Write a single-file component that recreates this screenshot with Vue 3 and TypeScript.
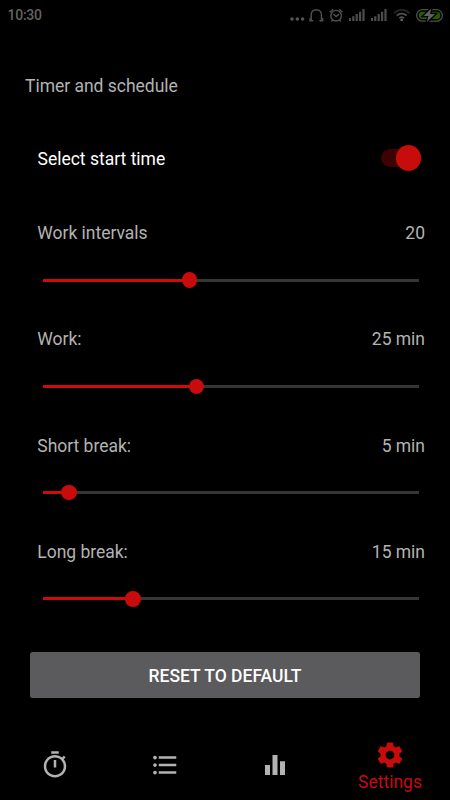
<script setup lang="ts">
import { ref } from 'vue'

interface Interval {
  label: string
  value: string
  percent: number
}

const intervals = ref<Interval[]>([
  { label: 'Work intervals', value: '20', percent: 38.9 },
  { label: 'Work:', value: '25 min', percent: 40.8 },
  { label: 'Short break:', value: '5 min', percent: 6.9 },
  { label: 'Long break:', value: '15 min', percent: 23.9 },
])
const startTime = ref(true)
</script>

<template>
  <div class="screen">
    <header class="status">
      <span class="clock">10:30</span>
      <svg class="status-icons" width="160" height="30" viewBox="0 0 160 30">
        <g fill="#555">
          <circle cx="2" cy="19" r="1.8" />
          <circle cx="7.3" cy="19" r="1.8" />
          <circle cx="12.6" cy="19" r="1.8" />
        </g>
        <g fill="none" stroke="#505050" stroke-width="1.4">
          <path d="M21.2 20V14.5a5.1 4.8 0 0 1 10.2 0V20" />
          <path d="M19.3 20.7h4M29.4 20.7h4M20 18v3M32.6 18v3" />
          <circle cx="46.1" cy="15.7" r="5.3" />
          <path d="M43.5 14.3l2.6 2.3 2.9-2.5M39.8 12.2l3.3-2.9M52.4 12.2l-3.3-2.9M42.7 20l-1.3 1.5M49.5 20l1.3 1.5" />
        </g>
        <g v-for="x in [59, 81]" :key="x" :transform="`translate(${x} 0)`" fill="#4d4d4d">
          <rect x="0" y="18" width="2" height="3" />
          <rect x="3.2" y="16.2" width="2.2" height="4.8" />
          <rect x="6.6" y="14" width="2.2" height="7" />
          <rect x="10" y="11.8" width="2.2" height="9.2" />
          <rect x="13.4" y="9" width="2.2" height="12" />
        </g>
        <g fill="none" stroke-width="1.8">
          <path d="M104 13.1a11 11 0 0 1 15.4 0" stroke="#252525" />
          <path d="M106.7 15.6a7.4 7.4 0 0 1 10 0" stroke="#505050" />
          <path d="M109.3 18.1a4 4 0 0 1 4.8 0" stroke="#505050" />
        </g>
        <circle cx="111.7" cy="19.9" r="1.4" fill="#606060" />
        <rect x="126.6" y="9.7" width="25.8" height="11.4" rx="5.7" fill="none" stroke="#4d4d4d" stroke-width="1.3" />
        <rect x="128.7" y="11.7" width="21.6" height="7.4" rx="3.7" fill="#275700" />
        <path d="M141.3 8.5l-7.7 7.5h4.8l-1.5 6 8.2-8h-5z" fill="#606060" stroke="#000" stroke-width="2.6" paint-order="stroke" />
      </svg>
    </header>

    <main>
      <h1>Timer and schedule</h1>
      <div class="switch-row">
        <span>Select start time</span>
        <button class="switch" role="switch" aria-label="Select start time" :aria-checked="startTime" @click="startTime = !startTime">
          <span class="thumb" />
        </button>
      </div>
      <section v-for="item in intervals" :key="item.label" class="setting">
        <div class="setting-head">
          <span>{{ item.label }}</span>
          <span>{{ item.value }}</span>
        </div>
        <div class="slider">
          <div class="fill" :style="{ width: item.percent + '%' }"></div>
          <div class="knob"></div>
          <div class="rest"></div>
        </div>
      </section>
      <button class="reset">RESET TO DEFAULT</button>
    </main>

    <nav>
      <a class="tab">
        <svg viewBox="0 0 24 24"><path d="M15 1H9v2h6V1zm-4 13h2V8h-2v6zm8.03-6.61l1.42-1.42c-.43-.51-.9-.99-1.41-1.41l-1.42 1.42C16.07 4.74 14.12 4 12 4c-4.97 0-9 4.03-9 9s4.02 9 9 9 9-4.03 9-9c0-2.12-.74-4.07-1.97-5.61zM12 20c-3.87 0-7-3.13-7-7s3.13-7 7-7 7 3.13 7 7-3.13 7-7 7z" /></svg>
      </a>
      <a class="tab">
        <svg viewBox="0 0 24 24"><path d="M4 10.5c-.83 0-1.5.67-1.5 1.5s.67 1.5 1.5 1.5 1.5-.67 1.5-1.5-.67-1.5-1.5-1.5zm0-6c-.83 0-1.5.67-1.5 1.5S3.17 7.5 4 7.5 5.5 6.83 5.5 6 4.83 4.5 4 4.5zm0 12c-.83 0-1.5.68-1.5 1.5s.68 1.5 1.5 1.5 1.5-.68 1.5-1.5-.67-1.5-1.5-1.5zM7 19h14v-2H7v2zm0-6h14v-2H7v2zm0-8v2h14V5H7z" /></svg>
      </a>
      <a class="tab">
        <svg viewBox="0 0 24 24"><path d="M10 20h4V4h-4v16zm-6 0h4v-8H4v8zM16 9v11h4V9h-4z" /></svg>
      </a>
      <a class="tab active">
        <svg viewBox="0 0 24 24"><path d="M19.43 12.98c.04-.32.07-.64.07-.98s-.03-.66-.07-.98l2.11-1.65c.19-.15.24-.42.12-.64l-2-3.46c-.12-.22-.39-.3-.61-.22l-2.49 1c-.52-.4-1.08-.73-1.69-.98l-.38-2.65C14.46 2.18 14.25 2 14 2h-4c-.25 0-.46.18-.49.42l-.38 2.65c-.61.25-1.17.59-1.69.98l-2.49-1c-.23-.09-.49 0-.61.22l-2 3.46c-.13.22-.07.49.12.64l2.11 1.65c-.04.32-.07.65-.07.98s.03.66.07.98l-2.11 1.65c-.19.15-.24.42-.12.64l2 3.46c.12.22.39.3.61.22l2.49-1c.52.4 1.08.73 1.69.98l.38 2.65c.03.24.24.42.49.42h4c.25 0 .46-.18.49-.42l.38-2.65c.61-.25 1.17-.59 1.69-.98l2.49 1c.23.09.49 0 .61-.22l2-3.46c.12-.22.07-.49-.12-.64l-2.11-1.65zM12 15.5c-1.93 0-3.5-1.57-3.5-3.5s1.57-3.5 3.5-3.5 3.5 1.57 3.5 3.5-1.57 3.5-3.5 3.5z" /></svg>
        <span>Settings</span>
      </a>
    </nav>
  </div>
</template>

<style>
body {
  background: #000;
}
</style>

<style scoped>
.screen {
  display: flex;
  flex-direction: column;
  width: 450px;
  height: 800px;
  overflow: hidden;
  background: #000;
  color: #b3b3b3;
  font: 17.5px/20px Roboto, sans-serif;
}
.status {
  display: flex;
  justify-content: space-between;
  height: 30px;
}
.clock {
  padding: 5px 0 0 7.5px;
  color: #626262;
  font-size: 14px;
  font-weight: 500;
  letter-spacing: -0.25px;
}
main {
  display: flex;
  flex-direction: column;
  flex: 1;
}
h1 {
  margin: 45.5px 25px 0;
  font: inherit;
  letter-spacing: -0.02px;
}
.switch-row {
  display: flex;
  align-items: center;
  justify-content: space-between;
  height: 26px;
  margin: 49.5px 29px 0 37.5px;
  color: #fff;
}
.switch-row > span {
  padding-top: 2px;
}
.switch {
  display: flex;
  align-items: center;
  justify-content: flex-end;
  width: 40px;
  height: 18px;
  padding: 0;
  border: 0;
  border-radius: 9px;
  background: #3d0303;
}
.thumb {
  width: 25.5px;
  height: 25.5px;
  flex: none;
  border-radius: 50%;
  background: #c80b0b;
}
.setting {
  height: 106.25px;
  margin: 0 25px 0 37.3px;
}
.switch-row + .setting {
  margin-top: 52.1px;
}
.setting-head {
  display: flex;
  justify-content: space-between;
  letter-spacing: -0.02px;
}
.slider {
  display: flex;
  align-items: center;
  height: 16px;
  margin: 29px 6px 0 6px;
}
.fill {
  height: 3px;
  flex: none;
  background: #d00a0a;
}
.knob {
  width: 15.5px;
  height: 15.5px;
  flex: none;
  margin: 0 -7.75px;
  border-radius: 50%;
  background: #c80b0b;
  z-index: 1;
}
.rest {
  flex: 1;
  height: 3px;
  background: #363636;
}
.reset {
  height: 45.6px;
  margin: 4px 30px 0;
  padding: 1.5px 0 0;
  border: 0;
  border-radius: 2.5px;
  background: #5b5a5c;
  color: #fff;
  font: 500 17.5px/20px Roboto, sans-serif;
}
nav {
  display: grid;
  grid-template-columns: repeat(4, 110px);
  height: 70px;
}
.tab {
  display: flex;
  flex-direction: column;
  align-items: center;
  padding-top: 20px;
}
.tab svg {
  width: 30px;
  height: 30px;
  fill: currentColor;
}
.active {
  width: 120px;
  padding-top: 10px;
  color: #c80b0b;
}
.active span {
  margin-top: 2px;
}
</style>
